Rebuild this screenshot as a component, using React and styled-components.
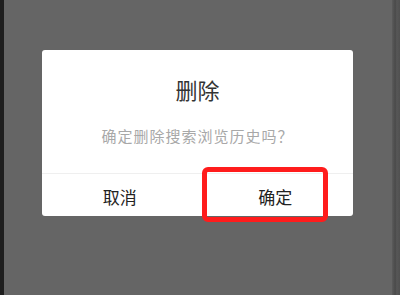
import React from "react";
import styled, { createGlobalStyle } from "styled-components";

const Global = createGlobalStyle`
  html, body { margin: 0; padding: 0; }
  body { font-family: "Noto Sans CJK SC", "Noto Sans", sans-serif; background: #656565; }
`;

const Screen = styled.div`
  width: 400px;
  height: 295px;
  display: flex;
  background: #656565;
  overflow: hidden;
`;

const EdgeLeft = styled.div`
  width: 4px;
  background: #1e1e1e;
`;

const EdgeRight = styled.div`
  width: 8px;
  background: linear-gradient(to right, #5c5c5c 0, #4a4a4a 40%, #575757 60%, #505050 100%);
`;

const Stage = styled.div`
  flex: 1;
  display: flex;
  justify-content: center;
  padding-top: 50px;
  padding-right: 1px;
`;

const Dialog = styled.div`
  position: relative;
  width: 311px;
  height: 166px;
  background: #fff;
  border-radius: 3px;
  display: flex;
  flex-direction: column;
`;

const Body = styled.div`
  height: 123px;
  display: flex;
  flex-direction: column;
  align-items: center;
  border-bottom: 1px solid #efefef;
`;

const Title = styled.div`
  margin-top: 27px;
  font-size: 22px;
  line-height: 24px;
  color: #333;
`;

const Message = styled.div`
  margin-top: 25px;
  font-size: 15px;
  line-height: 20px;
  color: #a8a8a8;
  letter-spacing: 1px;
`;

const Actions = styled.div`
  flex: 1;
  display: flex;
`;

const Action = styled.div`
  flex: 1;
  display: flex;
  align-items: center;
  justify-content: center;
  padding-top: 2px;
  font-size: 17px;
  color: #222;
`;

const Highlight = styled.div`
  position: absolute;
  left: 160px;
  top: 117px;
  width: 116px;
  height: 45px;
  border: 5px solid #ff1c1c;
  border-radius: 6px;
`;

export default function App() {
  return (
    <>
      <Global />
      <Screen>
        <EdgeLeft />
        <Stage>
          <Dialog>
            <Body>
              <Title>删除</Title>
              <Message>确定删除搜索浏览历史吗？</Message>
            </Body>
            <Actions>
              <Action>取消</Action>
              <Action>确定</Action>
            </Actions>
            <Highlight />
          </Dialog>
        </Stage>
        <EdgeRight />
      </Screen>
    </>
  );
}
